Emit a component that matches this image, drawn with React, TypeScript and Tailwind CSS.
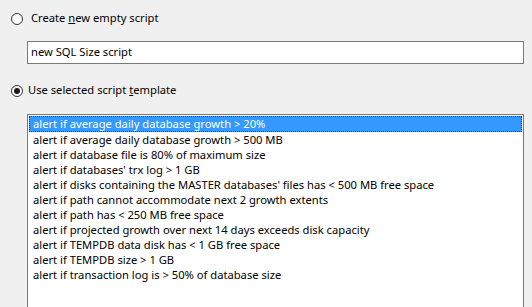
import React from "react";

const templates = [
  "alert if average daily database growth > 20%",
  "alert if average daily database growth > 500 MB",
  "alert if database file is 80% of maximum size",
  "alert if databases' trx log > 1 GB",
  "alert if disks containing the MASTER databases' files has < 500 MB free space",
  "alert if path cannot accommodate next 2 growth extents",
  "alert if path has < 250 MB free space",
  "alert if projected growth over next 14 days exceeds disk capacity",
  "alert if TEMPDB data disk has < 1 GB free space",
  "alert if TEMPDB size > 1 GB",
  "alert if transaction log is > 50% of database size",
];

const Radio = ({ checked }: { checked?: boolean }) => (
  <span className="w-[12px] h-[12px] rounded-full border border-[#333] bg-white flex items-center justify-center shrink-0">
    {checked && <span className="w-[6px] h-[6px] rounded-full bg-[#1a1a1a]" />}
  </span>
);

export default function App() {
  return (
    <div
      className="w-[532px] h-[307px] bg-[#f0f0f0] overflow-hidden text-[11.2px] text-black pt-[12px]"
      style={{ fontFamily: '"Noto Sans", sans-serif' }}
    >
      <div className="flex items-center gap-[8px] pl-[11px] h-[13px]">
        <Radio />
        <span>
          Create <span className="underline">n</span>ew empty script
        </span>
      </div>
      <div className="ml-[27px] mt-[16px] w-[497px] h-[23px] border border-[#7a7a7a] bg-white flex items-center pl-[3px]">
        new SQL Size script
      </div>
      <div className="flex items-center gap-[5px] pl-[11px] mt-[20px] h-[13px]">
        <Radio checked />
        <span>
          Use selected script <span className="underline">t</span>emplate
        </span>
      </div>
      <div className="ml-[27px] mt-[17px] w-[497px] h-[220px] border border-[#7a7a7a] bg-white p-[1px]">
        {templates.map((t, i) => (
          <div
            key={t}
            className={
              "whitespace-nowrap " +
              (i === 0
                ? "bg-[#3399ff] text-white h-[16px] leading-[14px] border border-dotted border-[#1a4d80] pl-[3px]"
                : "h-[15px] leading-[15px] pl-[4px]")
            }
          >
            {t}
          </div>
        ))}
      </div>
    </div>
  );
}
